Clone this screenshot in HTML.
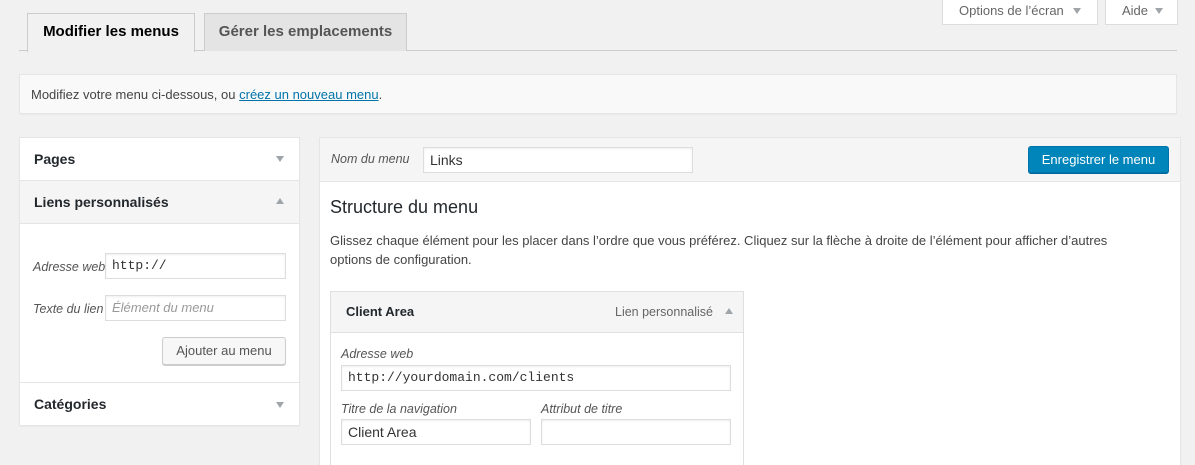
<!DOCTYPE html>
<html><head><meta charset="utf-8"><style>
*{box-sizing:border-box;margin:0;padding:0}
html,body{width:1195px;height:465px;overflow:hidden}
body{background:#f1f1f1;font-family:"Liberation Sans",sans-serif;font-size:13px;color:#444;position:relative}
.a{position:absolute}
.tab{top:13px;height:38px;border:1px solid #ccc;border-bottom:none;font-weight:bold;font-size:15px;line-height:36px;text-align:center}
.inp{position:absolute;background:#fff;border:1px solid #ddd;box-shadow:inset 0 1px 2px rgba(0,0,0,.07);height:26px;line-height:24px;padding-left:6px;font-size:13px;color:#333}
.mono{font-family:"Liberation Mono",monospace;font-size:13px}
.lbl{position:absolute;font-style:italic;color:#555;font-size:12.5px}
.tri{position:absolute;width:0;height:0;border-left:4px solid transparent;border-right:4px solid transparent}
.dn{border-top:6px solid #a0a5aa}.up{border-bottom:6px solid #a0a5aa}
</style></head><body>
<div class="a" style="left:19px;top:50px;width:1158px;height:1px;background:#ccc"></div>
<div class="a tab" style="left:27px;width:168px;background:#f1f1f1;color:#000;height:39px">Modifier les menus</div>
<div class="a tab" style="left:204px;width:203px;background:#e4e4e4;color:#555">Gérer les emplacements</div>
<div class="a" style="left:942px;top:-1px;width:156px;height:26px;background:#fff;border:1px solid #ddd;border-top:none;color:#666;font-size:13px;line-height:24px;padding-left:16px">Options de l’écran</div>
<div class="tri dn" style="left:1073px;top:8px"></div>
<div class="a" style="left:1105px;top:-1px;width:73px;height:26px;background:#fff;border:1px solid #ddd;border-top:none;color:#666;line-height:24px;padding-left:16px">Aide</div>
<div class="tri dn" style="left:1155px;top:8px"></div>

<div class="a" style="left:19px;top:74px;width:1158px;height:40px;background:#f9f9f9;border:1px solid #e5e5e5;box-shadow:0 1px 1px rgba(0,0,0,.04);line-height:40px;padding-left:11px;color:#444">Modifiez votre menu ci-dessous, ou <span style="color:#0073aa;text-decoration:underline">créez un nouveau menu</span>.</div>

<div class="a" style="left:19px;top:137px;width:281px;height:289px;background:#fff;border:1px solid #e5e5e5;box-shadow:0 1px 1px rgba(0,0,0,.04)">
 <div style="height:43px;border-bottom:1px solid #e5e5e5;font-weight:bold;color:#23282d;line-height:42px;padding-left:14px;font-size:14px">Pages</div>
 <div style="height:43px;border-bottom:1px solid #e5e5e5;background:#f5f5f5;font-weight:bold;color:#23282d;line-height:42px;padding-left:14px;font-size:14px">Liens personnalisés</div>
 <div style="height:159px;border-bottom:1px solid #e5e5e5"></div>
 <div style="font-weight:bold;color:#23282d;line-height:42px;padding-left:14px;font-size:14px">Catégories</div>
</div>
<div class="tri dn" style="left:276px;top:156px"></div>
<div class="tri up" style="left:276px;top:198px"></div>
<div class="tri dn" style="left:276px;top:402px"></div>
<div class="lbl" style="left:33px;top:260px">Adresse web</div>
<div class="inp mono" style="left:105px;top:253px;width:181px">http://</div>
<div class="lbl" style="left:33px;top:302px">Texte du lien</div>
<div class="inp" style="left:105px;top:295px;width:181px;color:#999;font-style:italic">Élément du menu</div>
<div class="a" style="left:162px;top:337px;width:124px;height:28px;background:#f7f7f7;border:1px solid #ccc;border-radius:3px;box-shadow:0 1px 0 #ccc;text-align:center;line-height:26px;color:#555">Ajouter au menu</div>

<div class="a" style="left:319px;top:137px;width:862px;height:340px;background:#fff;border:1px solid #e5e5e5">
 <div style="height:44px;background:#f5f5f5;border-bottom:1px solid #e5e5e5"></div>
</div>
<div class="lbl" style="left:331px;top:152px">Nom du menu</div>
<div class="inp" style="left:423px;top:147px;width:270px;font-size:14px">Links</div>
<div class="a" style="left:1028px;top:146px;width:141px;height:27px;background:#0085ba;border:1px solid #0073aa;border-radius:3px;box-shadow:0 1px 0 #006799;color:#fff;text-align:center;line-height:25px">Enregistrer le menu</div>
<div class="a" style="left:330px;top:197px;font-size:18px;color:#23282d">Structure du menu</div>
<div class="a" style="left:330px;top:231px;width:805px;line-height:19px;color:#444">Glissez chaque élément pour les placer dans l’ordre que vous préférez. Cliquez sur la flèche à droite de l’élément pour afficher d’autres options de configuration.</div>

<div class="a" style="left:330px;top:291px;width:414px;height:190px;background:#fff;border:1px solid #dfdfdf">
 <div style="height:41px;background:#f5f5f5;border-bottom:1px solid #dfdfdf;font-weight:bold;color:#23282d;line-height:40px;padding-left:15px">Client Area<span style="position:absolute;right:30px;font-weight:normal;color:#666;font-size:12.5px">Lien personnalisé</span></div>
</div>
<div class="tri up" style="left:725px;top:308px"></div>
<div class="lbl" style="left:341px;top:347px">Adresse web</div>
<div class="inp mono" style="left:341px;top:365px;width:390px">http://yourdomain.com/clients</div>
<div class="lbl" style="left:341px;top:402px">Titre de la navigation</div>
<div class="lbl" style="left:541px;top:402px">Attribut de titre</div>
<div class="inp" style="left:341px;top:419px;width:190px;font-size:14px">Client Area</div>
<div class="inp" style="left:541px;top:419px;width:190px"></div>
</body></html>
